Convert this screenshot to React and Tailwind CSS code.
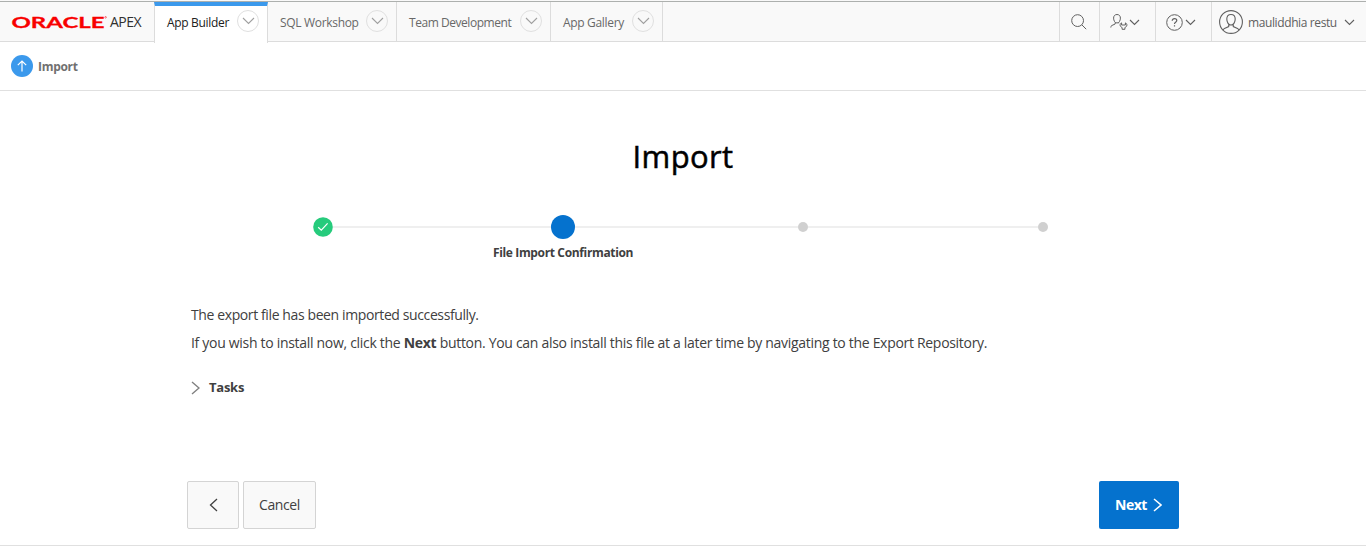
const tabs = [
  { label: 'App Builder', active: true, width: 'w-[114px]', text: 'tracking-[-0.32px]' },
  { label: 'SQL Workshop', width: 'w-[129px]', text: 'tracking-[-0.32px]' },
  { label: 'Team Development', width: 'w-[154px]', text: 'tracking-[-0.45px]' },
  { label: 'App Gallery', width: 'w-[112px]', text: 'tracking-[-0.32px]' },
];

function Chevron({ className = '', d = 'M1 1L5.5 5.5L10 1', w = 11, h = 7, sw = 1.1 }) {
  return (
    <svg className={'shrink-0 ' + className} width={w} height={h} viewBox={`0 0 ${w} ${h}`} fill="none" stroke="currentColor" strokeWidth={sw}>
      <path d={d} />
    </svg>
  );
}

function Logo() {
  return (
    <div className="flex w-[154px] shrink-0 pl-[11px]">
      <svg width="96" height="40" viewBox="0 0 96 40" className="shrink-0">
        <text x="0.5" y="25.6" textLength="93" lengthAdjust="spacingAndGlyphs" fontFamily="Lato, sans-serif" fontWeight="700" fontSize="16" fill="#f80000" stroke="#f80000" strokeWidth="0.3">ORACLE</text>
        <circle cx="94.6" cy="15.3" r="0.8" fill="none" stroke="#f80000" strokeWidth="0.5" />
      </svg>
      <span className="ml-[3px] text-[14px] leading-[40px] tracking-[-0.55px] text-[#303030]">APEX</span>
    </div>
  );
}

function Tab({ label, active, width, text }) {
  return (
    <div
      className={
        'flex shrink-0 justify-between border-r border-[#dcdcdc] pr-2 pl-3 ' + width +
        (active ? ' h-[41px] border-l border-t-4 border-t-[#3b99ec] bg-white text-[#202020]' : ' h-10 text-[#686868]')
      }
    >
      <span className={'whitespace-nowrap text-[12px] leading-[18px] ' + text + (active ? ' pt-[8px]' : ' pt-[12px]')}>{label}</span>
      <span className={'flex size-[22px] shrink-0 items-center justify-center rounded-full border border-[#e0e0e0] text-[#a0a0a0] ' + (active ? 'mt-1' : 'mt-2')}>
        <Chevron w={13} h={8} d="M1 1L6.5 6.5L12 1" />
      </span>
    </div>
  );
}

function Person() {
  return (
    <svg className="shrink-0" width="24" height="24" viewBox="0 0 24 24" fill="none" stroke="#606060" strokeWidth="1.1">
      <circle cx="12" cy="12" r="11.4" />
      <path d="M12 4.5c-2.7 0-4.2 1.9-4.2 4.6 0 2.8 1.5 5.9 4.2 5.9s4.2-3.1 4.2-5.9c0-2.7-1.5-4.6-4.2-4.6zM9.7 14.5v2.1l-4.2 1.8c-.8.4-1.3.9-1.5 1.7M14.3 14.5v2.1l4.2 1.8c.8.4 1.3.9 1.5 1.7" />
    </svg>
  );
}

function Header() {
  return (
    <header className="flex h-[42px] shrink-0 border-b border-[#dcdcdc] bg-[#f9f9f9] pt-px">
      <div className="flex h-10 w-full border-t border-[#adb0ae]">
        <Logo />
        {tabs.map((t) => (
          <Tab key={t.label} {...t} />
        ))}
        <div className="ml-auto flex h-10 text-[#606060]">
          <div className="flex w-10 items-center border-l border-[#dcdcdc] pl-[11px]">
            <svg width="16" height="16" viewBox="0 0 16 16" fill="none" stroke="currentColor" strokeWidth="1">
              <circle cx="6.6" cy="6.6" r="5.9" />
              <path d="M10.9 10.9L15.2 15.2" />
            </svg>
          </div>
          <div className="flex w-14 items-center border-l border-[#dcdcdc] pl-[10px]">
            <svg className="shrink-0" width="18" height="18" viewBox="0 0 18 18" fill="none" stroke="currentColor" strokeWidth="1">
              <path d="M7 1.5C4.8 1.5 3.6 3 3.6 5.1c0 2.3 1.2 4.9 3.4 4.9s3.4-2.6 3.4-4.9c0-2.1-1.2-3.6-3.4-3.6zM5.2 9.4v1.6l-3.4 1.5c-.7.3-1 1-1 2M8.8 9.4v1" />
              <path d="M11.6 9.9c-1.1.4-1.5 1.2-1.5 2.1 0 1.4.9 2 2 2.5v1.8h2.8v-1.8c1.1-.5 2-1.1 2-2.5 0-.9-.4-1.7-1.5-2.1v2.1h-3.8z" />
            </svg>
            <Chevron className="ml-[1px]" />
          </div>
          <div className="flex w-14 items-center border-l border-[#dcdcdc] pl-[10px]">
            <svg width="17" height="17" viewBox="0 0 17 17" fill="none" stroke="currentColor" strokeWidth="1">
              <circle cx="8.5" cy="8.5" r="7.8" />
              <path d="M6.2 6.8c0-1.4 1-2.2 2.3-2.2s2.3.8 2.3 2c0 1.7-2.3 1.6-2.3 3.3M8.5 11.2v1.3" strokeWidth="1.2" />
            </svg>
            <Chevron className="ml-[2px]" />
          </div>
          <div className="flex w-[155px] items-center border-l border-[#dcdcdc] pl-[7px]">
            <Person />
            <span className="ml-[5px] w-[89px] whitespace-nowrap pt-[2px] text-[12px] tracking-[-0.39px]">mauliddhia restu</span>
            <Chevron className="ml-[7px]" />
          </div>
        </div>
      </div>
    </header>
  );
}

function Progress() {
  return (
    <div className="mx-auto w-[740px]">
      <div className="flex h-6 items-center">
        <svg className="shrink-0" width="20" height="20" viewBox="0 0 20 20">
          <circle cx="10" cy="10" r="9.8" fill="#26cb7c" />
          <path d="M5.2 10.2L8.3 13.2L14.6 6.4" fill="none" stroke="white" strokeWidth="1.2" />
        </svg>
        <span className="h-[2px] w-[218px] bg-[#efefef]" />
        <span className="size-6 shrink-0 rounded-full bg-[#0572ce]" />
        <span className="h-[2px] w-[223px] bg-[#efefef]" />
        <span className="size-[10px] shrink-0 rounded-full bg-[#d0d0d0]" />
        <span className="h-[2px] w-[230px] bg-[#efefef]" />
        <span className="size-[10px] shrink-0 rounded-full bg-[#d0d0d0]" />
      </div>
      <div className="ml-[150px] flex w-[200px] justify-center pt-[5px]">
        <span className="whitespace-nowrap text-[12px] font-bold leading-[18px] tracking-[-0.35px] text-[#404040]">File Import Confirmation</span>
      </div>
    </div>
  );
}

export default function App() {
  return (
    <div className="flex h-[546px] flex-col overflow-hidden bg-white font-['Open_Sans','Noto_Sans',sans-serif] text-[#404040]">
      <Header />
      <div className="flex h-[49px] shrink-0 items-center border-b border-[#e0e0e0] pl-[11px]">
        <span className="flex size-[22px] items-center justify-center rounded-full bg-[#3b99ec]">
          <svg width="12" height="12" viewBox="0 0 12 12" fill="none" stroke="white" strokeWidth="1.2">
            <path d="M6 11.5V1M1.8 5.2L6 1L10.2 5.2" />
          </svg>
        </span>
        <span className="ml-[5px] pt-[2px] text-[12px] font-bold tracking-[-0.3px] text-[#707070]">Import</span>
      </div>
      <main className="flex flex-1 flex-col border-b border-[#e0e0e0]">
        <h1 className="mt-[45px] text-center text-[31px] font-medium leading-[40px] tracking-[0.35px] text-black [-webkit-text-stroke:0.5px_black]">Import</h1>
        <div className="mt-[39px]">
          <Progress />
        </div>
        <div className="ml-[191px] mt-[43px] text-[14px] leading-[20px]">
          <p className="tracking-[-0.39px]">The export file has been imported successfully.</p>
          <p className="mt-2 whitespace-nowrap tracking-[-0.302px]">If you wish to install now, click the <b>Next</b> button. You can also install this file at a later time by navigating to the Export Repository.</p>
        </div>
        <div className="ml-[191px] mt-[25px] flex h-5 items-center">
          <Chevron className="text-[#808080]" w={9} h={14} sw={1.4} d="M1 1L8 7L1 13" />
          <span className="ml-[9px] text-[13px] font-bold tracking-[-0.25px]">Tasks</span>
        </div>
        <div className="mx-[187px] mt-auto mb-4 flex gap-1 text-[14px]">
          <button className="flex h-12 w-[52px] items-center justify-center rounded-[2px] border border-[#d4d4d4] bg-[#f9f9f9]">
            <Chevron w={9} h={14} sw={1.3} d="M8 1L1.5 7L8 13" />
          </button>
          <button className="h-12 w-[73px] rounded-[2px] border border-[#d4d4d4] bg-[#f9f9f9] pb-px tracking-[-0.4px]">Cancel</button>
          <button className="ml-auto flex h-12 w-20 items-center justify-center rounded-[2px] bg-[#0572ce] pr-px font-bold text-white">
            <span className="pb-px tracking-[-0.5px]">Next</span>
            <Chevron className="ml-[6px]" w={9} h={14} sw={1.5} d="M1 1L8 7L1 13" />
          </button>
        </div>
      </main>
    </div>
  );
}
